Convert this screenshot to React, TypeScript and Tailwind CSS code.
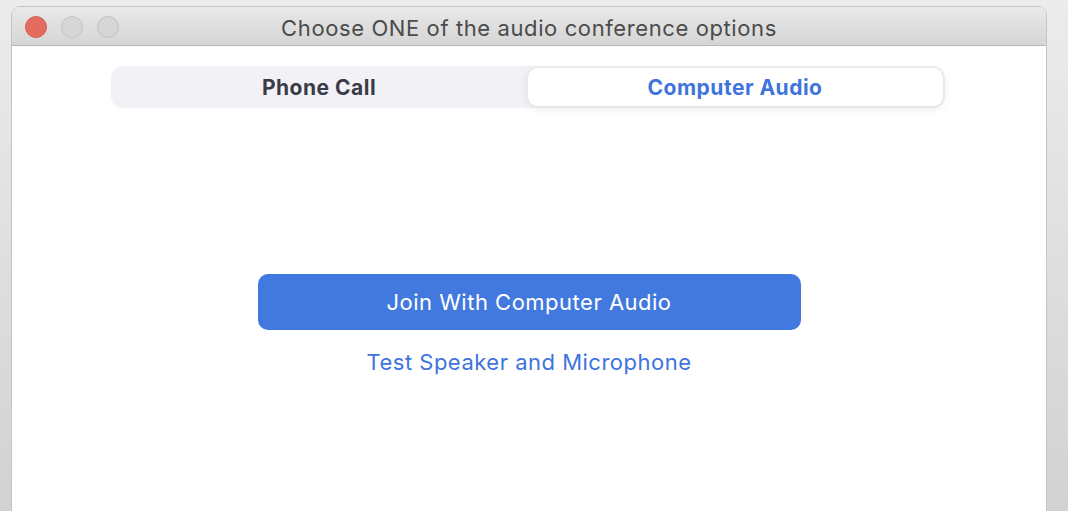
import React from "react";

const TrafficLight = ({ color }: { color: string }) => (
  <span className={`block w-[22px] h-[22px] rounded-full ${color}`} />
);

export default function App() {
  return (
    <div
      className="w-[1068px] h-[511px] overflow-hidden bg-gradient-to-b from-[#ececec] to-[#d2d2d2] pl-[11px] pr-[21px] pt-[6px]"
      style={{ fontFamily: "Inter, 'Noto Sans', sans-serif" }}
    >
      <div className="flex flex-col h-[520px] rounded-t-[9px] border border-[#c4c4c4] bg-white overflow-hidden">
        {/* title bar */}
        <div className="relative flex items-center justify-center h-[39px] pt-[3px] bg-gradient-to-b from-[#e9e9e9] to-[#d5d5d5] border-b border-[#b8b8b8]">
          <div className="absolute left-[13px] top-[9px] flex gap-[14px]">
            <TrafficLight color="bg-[#e46c5e] border border-[#d35e52]" />
            <TrafficLight color="bg-[#d6d6d6] border border-[#c2c2c2]" />
            <TrafficLight color="bg-[#d6d6d6] border border-[#c2c2c2]" />
          </div>
          <span className="text-[22px] leading-none text-[#4b4b4b] tracking-[0.6px]">
            Choose ONE of the audio conference options
          </span>
        </div>

        {/* content */}
        <div className="flex flex-col items-center pt-[20px]">
          <div className="flex w-[834px] h-[42px] mr-[3px] rounded-[12px] bg-[#f2f2f6] p-[1px]">
            <button className="flex-1 flex items-center justify-center pt-[1px] text-[21px] tracking-[0.5px] font-bold text-[#3a3a48]">
              Phone Call
            </button>
            <button className="flex-1 flex items-center justify-center pt-[1px] rounded-[11px] bg-white border border-[#e6e6ec] shadow-[0_2px_8px_rgba(0,0,0,0.08)] text-[21px] tracking-[0.5px] font-bold text-[#3e74dc]">
              Computer Audio
            </button>
          </div>

          <button className="mt-[166px] w-[543px] h-[56px] rounded-[10px] bg-[#4279de] text-white text-[22px] tracking-[0.5px]">
            Join With Computer Audio
          </button>
          <button className="mt-[16px] text-[22px] tracking-[0.5px] text-[#3e74dc]">
            Test Speaker and Microphone
          </button>
        </div>
      </div>
    </div>
  );
}
